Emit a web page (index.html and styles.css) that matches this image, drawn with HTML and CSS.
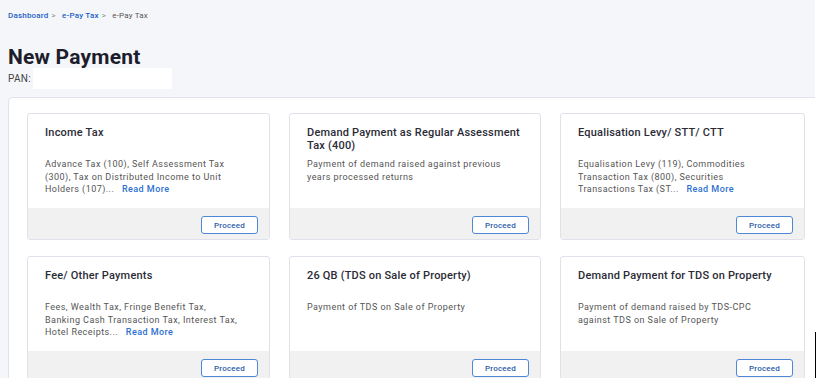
FILE: index.html
```html
<!DOCTYPE html>
<html lang="en">
<head>
  <meta charset="UTF-8">
  <meta name="viewport" content="width=device-width, initial-scale=1">
  <title>New Payment</title>
  <link rel="stylesheet" href="styles.css">
</head>
<body>
  <div class="page">
    <div class="top">
      <div class="crumbs">
        <a href="#">Dashboard</a><span class="sep">&gt;</span>
        <a href="#">e-Pay Tax</a><span class="sep">&gt;</span>
        <span class="here">e-Pay Tax</span>
      </div>
      <h1>New Payment</h1>
      <div class="pan">PAN:<span class="pan-box"></span></div>
    </div>

    <div class="panel">
      <div class="cards">
        <div class="card">
          <div class="card-body">
            <h3>Income Tax</h3>
            <p>Advance Tax (100), Self Assessment Tax<br>(300), Tax on Distributed Income to Unit<br>Holders (107)... <a href="#" class="more">Read More</a></p>
          </div>
          <div class="card-foot"><button class="btn">Proceed</button></div>
        </div>
        <div class="card">
          <div class="card-body">
            <h3>Demand Payment as Regular Assessment<br>Tax (400)</h3>
            <p>Payment of demand raised against previous<br>years processed returns</p>
          </div>
          <div class="card-foot"><button class="btn">Proceed</button></div>
        </div>
        <div class="card">
          <div class="card-body">
            <h3>Equalisation Levy/ STT/ CTT</h3>
            <p>Equalisation Levy (119), Commodities<br>Transaction Tax (800), Securities<br>Transactions Tax (ST... <a href="#" class="more">Read More</a></p>
          </div>
          <div class="card-foot"><button class="btn">Proceed</button></div>
        </div>
        <div class="card">
          <div class="card-body">
            <h3>Fee/ Other Payments</h3>
            <p>Fees, Wealth Tax, Fringe Benefit Tax,<br>Banking Cash Transaction Tax, Interest Tax,<br>Hotel Receipts... <a href="#" class="more">Read More</a></p>
          </div>
          <div class="card-foot"><button class="btn">Proceed</button></div>
        </div>
        <div class="card">
          <div class="card-body">
            <h3>26 QB (TDS on Sale of Property)</h3>
            <p>Payment of TDS on Sale of Property</p>
          </div>
          <div class="card-foot"><button class="btn">Proceed</button></div>
        </div>
        <div class="card">
          <div class="card-body">
            <h3>Demand Payment for TDS on Property</h3>
            <p>Payment of demand raised by TDS-CPC<br>against TDS on Sale of Property</p>
          </div>
          <div class="card-foot"><button class="btn">Proceed</button></div>
        </div>
      </div>
    </div>
  </div>
  <div class="gutter"><span class="cursor"></span></div>
</body>
</html>
```

FILE: styles.css
```css
body {
  margin: 0;
  font-family: 'Roboto', 'Liberation Sans', sans-serif;
  background: #fff;
  color: #333;
  display: flex;
  height: 378px;
  overflow: hidden;
}
.page {
  width: 815px;
  flex: none;
  background: #f5f6fa;
  overflow: hidden;
}
.top {
  padding: 11px 8px 0;
  height: 86px;
}
.crumbs {
  font-size: 8px;
  line-height: 10px;
  color: #555;
  letter-spacing: 0.2px;
}
.crumbs a {
  color: #2361c4;
  text-decoration: none;
  font-weight: 500;
}
.crumbs .sep {
  color: #888;
  margin: 0 4px 0 3px;
}
h1 {
  margin: 24px 0 0;
  font-size: 21px;
  line-height: 24px;
  font-weight: 700;
  color: #1d1d2b;
  letter-spacing: 0.2px;
}
.pan {
  display: flex;
  align-items: center;
  font-size: 10px;
  color: #444;
  letter-spacing: 0.3px;
  margin-top: -1px;
}
.pan-box {
  display: inline-block;
  width: 139px;
  height: 21px;
  background: #fff;
  margin-left: 2px;
}
.panel {
  margin: 0 -30px 0 8px;
  background: #fff;
  border: 1px solid #e2e2ee;
  border-radius: 5px;
  padding: 15px 18px 20px;
  height: 300px;
}
.cards {
  display: grid;
  grid-template-columns: 243px 252px 245px;
  column-gap: 19px;
  row-gap: 16px;
}
.card {
  border: 1px solid #e1e1ec;
  border-radius: 3px;
  background: #fff;
  overflow: hidden;
}
.card-body {
  height: 94px;
  padding: 12px 17px 0;
  box-sizing: border-box;
}
.card h3 {
  margin: 0;
  font-size: 11px;
  line-height: 13px;
  font-weight: 500;
  color: #2b2b36;
  min-height: 26px;
  letter-spacing: 0.2px;
}
.card p {
  margin: 6px 0 0;
  font-size: 9px;
  line-height: 12.5px;
  color: #555;
  letter-spacing: 0.45px;
}
.more {
  color: #2d6fd1;
  text-decoration: none;
  font-weight: 500;
  margin-left: 5px;
}
.card-foot {
  background: #f1f1f1;
  height: 31px;
  padding: 8px 11px 0;
  box-sizing: border-box;
  display: flex;
  justify-content: flex-end;
  align-items: flex-start;
}
.btn {
  width: 57px;
  height: 18px;
  padding: 0;
  background: #fff;
  border: 1px solid #4d87d6;
  border-radius: 3px;
  color: #2a5ba8;
  font-family: inherit;
  font-size: 8px;
  font-weight: 500;
  letter-spacing: 0.2px;
}
.gutter {
  flex: 1;
  padding-top: 332px;
}
.cursor {
  display: block;
  width: 1px;
  height: 46px;
  background: #000;
}
```
